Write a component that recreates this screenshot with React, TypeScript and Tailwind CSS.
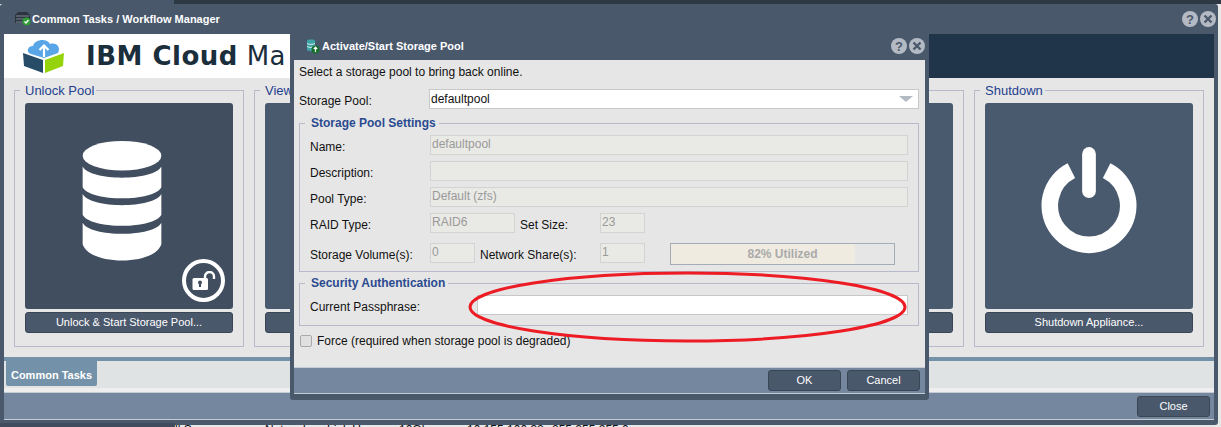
const sans = 'font-["Liberation_Sans",Arial,sans-serif]';

const TitleButtons = () => (
  <div className="flex gap-[2px]">
    <div className="w-[16px] h-[16px] rounded-full bg-[#b4bac4] flex items-center justify-center text-[13px] font-bold leading-none text-[#4a586c]">?</div>
    <div className="w-[16px] h-[16px] rounded-full bg-[#b4bac4] flex items-center justify-center">
      <svg width="10" height="10" viewBox="0 0 10 10">
        <path d="M1.5 1.5 8.5 8.5M8.5 1.5 1.5 8.5" stroke="#4a586c" strokeWidth="2.4" />
      </svg>
    </div>
  </div>
);

const TaskIcon = () => (
  <svg width="16" height="14" viewBox="0 0 16 14">
    <path d="M3 0h9l3 3v8H0V3z" fill="#2c3440" />
    <path d="M1 4h13M1 7h13M1 10h8" stroke="#7c8794" strokeWidth="1" />
    <circle cx="11.5" cy="9.5" r="4" fill="#2f9e35" />
    <path d="M9.5 9.5l1.5 1.5 2.5-3" stroke="#fff" strokeWidth="1.3" fill="none" />
  </svg>
);

const PoolIcon = () => (
  <svg width="14" height="16" viewBox="0 0 14 16">
    <path d="M1 2.5C1 1 9 1 9 2.5V12C9 13.5 1 13.5 1 12z" fill="#3fa3a8" />
    <path d="M1 5.5c2 1.2 6 1.2 8 0M1 8.5c2 1.2 6 1.2 8 0" stroke="#d6eeee" strokeWidth="1" fill="none" />
    <circle cx="9.5" cy="11.5" r="4" fill="#16702c" />
    <path d="M9.5 14V9.5M7.8 11l1.7-1.8 1.7 1.8" stroke="#fff" strokeWidth="1.2" fill="none" />
  </svg>
);

const CloudLogo = () => (
  <svg width="44" height="36" viewBox="0 0 44 36">
    <path d="M9 16C4 15 5 8 11 8 13 1 25 0 28 6 35 4 39 10 36 15L22 20z" fill="#58a6e8" />
    <path d="M1 15 21 22V35L2 28z" fill="#274c68" />
    <path d="M23 22 42 15 41 28 23 35z" fill="#95d30d" />
    <path d="M22 19V8M17.500 12 22 7.500 26.500 12" stroke="#fff" strokeWidth="2.2" fill="none" />
  </svg>
);

const DatabaseIcon = () => (
  <svg className="mr-[14px] mb-[10px]" width="82" height="122" viewBox="0 0 82 124">
    <ellipse cx="41" cy="16" rx="40" ry="15" fill="#fff" />
    <path d="M1 27C8 42 74 42 81 27V48C74 63 8 63 1 48z" fill="#fff" />
    <path d="M1 55C8 70 74 70 81 55V76C74 91 8 91 1 76z" fill="#fff" />
    <path d="M1 84C8 99 74 99 81 84V106C74 128 8 128 1 106z" fill="#fff" />
  </svg>
);

const UnlockBadge = () => (
  <div className="absolute right-[8px] bottom-[7px] w-[43px] h-[43px] rounded-full border-[4px] border-white bg-[#414e60] flex items-center justify-center">
    <svg width="24" height="20" viewBox="0 0 24 20">
      <rect x="0.500" y="7" width="15.500" height="12" rx="1.500" fill="#fff" />
      <path d="M13 8V5.500a4.500 4.500 0 0 1 9 0V8" stroke="#fff" strokeWidth="2.400" fill="none" />
      <circle cx="8" cy="11.500" r="2" fill="#414e60" />
      <rect x="7" y="12" width="2" height="4" fill="#414e60" />
    </svg>
  </div>
);

const PowerIcon = () => (
  <svg className="mb-[10px]" width="96" height="108" viewBox="0 0 98 110">
    <path d="M31 24A40 40 0 1 0 67 24" stroke="#fff" strokeWidth="17" fill="none" />
    <rect x="42" y="0" width="14" height="52" rx="7" fill="#fff" />
  </svg>
);

const DarkButton = ({ label, className }: { label: string; className: string }) => (
  <button className={`h-[21px] rounded-[3px] border border-[#3a4656] bg-[#4a586c] text-white text-[11px] ${className}`}>
    {label}
  </button>
);

const TaskColumn = ({ title, button, dark, icon }: { title: string; button: string; dark?: boolean; icon?: React.ReactNode }) => (
  <fieldset className="w-[230px] h-[264px] border border-[#b9b9cc] px-[10px] pb-[10px] min-w-0">
    <legend className="-ml-[5px] pl-[5px] pr-[2px] h-[14px] text-[13px] leading-[16px] text-[#1f3f8f]">{title}</legend>
    <div className={`relative h-[206px] mt-[6px] rounded-[3px] flex items-center justify-center ${dark ? 'bg-[#414e60]' : 'bg-[#4a5a6e]'}`}>
      {icon}
    </div>
    <DarkButton label={button} className="w-full mt-[3px]" />
  </fieldset>
);

const Label = ({ text, className }: { text: string; className: string }) => (
  <span className={`shrink-0 pt-[3px] text-[12px] leading-[18px] ${className}`}>{text}</span>
);

const Field = ({ value, className }: { value?: string; className: string }) => (
  <div className={`h-[20px] border border-[#d3d3d3] bg-[#e9e9e5] px-[1px] text-[12px] leading-[16px] text-[#9a9a9a] ${className}`}>
    {value}
  </div>
);

const StorageDialog = () => (
  <div className="absolute left-[290px] top-[32px] w-[639px] h-[368px] rounded-[3px] bg-[#4a586c] flex flex-col">
    <div className="h-[28px] pl-[16px] pr-[4px] flex items-center justify-between shrink-0">
      <div className="flex items-center gap-[2px] text-white font-bold text-[11px]">
        <PoolIcon />
        <span>Activate/Start Storage Pool</span>
      </div>
      <TitleButtons />
    </div>
    <div className="mx-[4px] h-[307px] bg-[#e6e6e6] text-[#111] px-[5px] shrink-0">
      <p className="text-[12px] leading-[14px] pt-[5px]">Select a storage pool to bring back online.</p>
      <div className="flex items-start h-[20px] mt-[10px]">
        <Label text="Storage Pool:" className="w-[130px]" />
        <div className="w-[490px] h-[20px] bg-white border border-[#c8c8c8] pl-[1px] pr-[5px] flex items-center justify-between text-[12px]">
          <span>defaultpool</span>
          <span className="w-0 h-0 border-x-[7px] border-x-transparent border-t-[6px] border-t-[#b4bac4]" />
        </div>
      </div>
      <fieldset className="w-[620px] h-[156px] mt-[7px] border border-[#b9b9cc] px-[10px] min-w-0">
        <legend className="-ml-[5px] pl-[6px] pr-[3px] text-[12px] leading-[14px] font-bold text-[#2a4a8f]">Storage Pool Settings</legend>
        <div className="flex flex-col gap-[6px] mt-[5px]">
          <div className="flex items-start h-[20px]">
            <Label text="Name:" className="w-[120px]" />
            <Field value="defaultpool" className="w-[478px]" />
          </div>
          <div className="flex items-start h-[20px]">
            <Label text="Description:" className="w-[120px]" />
            <Field className="w-[478px]" />
          </div>
          <div className="flex items-start h-[20px]">
            <Label text="Pool Type:" className="w-[120px]" />
            <Field value="Default (zfs)" className="w-[478px]" />
          </div>
          <div className="flex items-start h-[20px]">
            <Label text="RAID Type:" className="w-[120px]" />
            <Field value="RAID6" className="w-[85px]" />
            <Label text="Set Size:" className="w-[85px] pl-[5px]" />
            <Field value="23" className="w-[45px]" />
          </div>
          <div className="flex items-start mt-[4px]">
            <Label text="Storage Volume(s):" className="w-[120px]" />
            <Field value="0" className="w-[45px]" />
            <Label text="Network Share(s):" className="w-[125px] pl-[5px]" />
            <Field value="1" className="w-[45px]" />
            <div className="ml-[25px] w-[225px] h-[22px] border border-[#a4acb8] bg-[#e6e6e6] relative">
              <div className="w-[184px] h-full bg-[#f0ebe0]" />
              <span className="absolute inset-0 flex items-center justify-center text-[12px] font-bold text-[#aaa]">82% Utilized</span>
            </div>
          </div>
        </div>
      </fieldset>
      <fieldset className="w-[620px] h-[50px] mt-[4px] border border-[#b9b9cc] px-[10px] min-w-0">
        <legend className="-ml-[5px] pl-[6px] pr-[3px] text-[12px] leading-[14px] font-bold text-[#2a4a8f]">Security Authentication</legend>
        <div className="flex items-start h-[20px] mt-[5px]">
          <Label text="Current Passphrase:" className="w-[167px]" />
          <div className="w-[431px] h-[20px] bg-white border border-[#c8c8c8]" />
        </div>
      </fieldset>
      <label className="flex items-center mt-[8px] text-[12px] leading-[14px]">
        <span className="w-[12px] h-[12px] ml-[1px] rounded-[2px] border border-[#aaa] bg-[#e0e0e0]" />
        <span className="ml-[5px]">Force (required when storage pool is degraded)</span>
      </label>
    </div>
    <div className="mx-[4px] h-[27px] border-y border-y-[#c6ccd6] bg-[#75879f] flex items-center justify-end gap-[6px] pr-[5px] shrink-0">
      <DarkButton label="OK" className="w-[73px]" />
      <DarkButton label="Cancel" className="w-[73px]" />
    </div>
  </div>
);

export default function App() {
  return (
    <div className={`relative w-[1221px] h-[427px] overflow-hidden bg-[#e8e8e8] ${sans}`}>
      {/* page behind the window */}
      <div className="flex h-[4px]">
        <div className="w-[174px] bg-[#4a586c]" />
        <div className="flex-1 bg-[#2e3744]" />
      </div>
      <div className="absolute left-0 top-[423px] w-[175px] h-[4px] bg-[#404c5e]" />
      <div className="absolute left-[175px] top-[423px] flex text-[12px] leading-[14px] text-[#111] whitespace-nowrap">
        <span className="w-[90px]">ll Secure</span>
        <span className="w-[62px]">Network</span>
        <span className="w-[72px]">Link Up</span>
        <span className="w-[68px]">10Gb</span>
        <span className="w-[85px]">10.155.100.32</span>
        <span>255.255.255.0</span>
      </div>

      <div className="w-[1218px] h-[421px] rounded-[3px] bg-[#4a586c] flex flex-col">
        <div className="h-[30px] pl-[15px] pr-[2px] flex items-center justify-between shrink-0">
          <div className="flex items-center gap-[1px] text-white font-bold text-[11px]">
            <TaskIcon />
            <span>Common Tasks / Workflow Manager</span>
          </div>
          <TitleButtons />
        </div>

        <div className="mx-[4px] h-[44px] flex shrink-0">
          <div className="w-[925px] bg-white flex items-center pl-[18px]">
            <CloudLogo />
            <span className="ml-[20px] text-[26px] tracking-[0.5px] leading-none whitespace-nowrap text-[#1b2e3c] font-['DejaVu_Sans',sans-serif]">
              <b>IBM Cloud</b> Ma
            </span>
          </div>
          <div className="flex-1 bg-[#203549]" />
        </div>

        <div className="mx-[4px] h-[279px] bg-[#e6e6e6] px-[10px] pt-[5px] flex gap-[10px] shrink-0">
          <TaskColumn title="Unlock Pool" button="Unlock & Start Storage Pool..." dark icon={<><DatabaseIcon /><UnlockBadge /></>} />
          <TaskColumn title="View" button="" />
          <TaskColumn title="" button="" />
          <TaskColumn title="" button="" />
          <TaskColumn title="Shutdown" button="Shutdown Appliance..." icon={<PowerIcon />} />
        </div>

        <div className="mx-[4px] h-[35px] border-t-[4px] border-t-[#7391a8] bg-[#eeeeee] shrink-0">
          <div className="h-[27px] bg-[#e0e3e4] pl-[2px]">
            <div className="w-[91px] h-[25px] pt-[3px] rounded-b-[2px] bg-[#7391a8] text-white font-bold text-[11px] flex items-center justify-center">
              Common Tasks
            </div>
          </div>
        </div>

        <div className="mx-[4px] h-[28px] border-y border-y-[#c6ccd6] bg-[#75879f] flex items-center justify-end pr-[4px] shrink-0">
          <DarkButton label="Close" className="w-[73px]" />
        </div>
      </div>

      <StorageDialog />

      {/* hand drawn annotation round the passphrase field */}
      <svg className="absolute left-[465px] top-[270px]" width="445" height="76" viewBox="0 0 445 76">
        <ellipse cx="222.500" cy="37" rx="217.500" ry="34" fill="none" stroke="#ed1c24" strokeWidth="3" />
      </svg>
    </div>
  );
}
